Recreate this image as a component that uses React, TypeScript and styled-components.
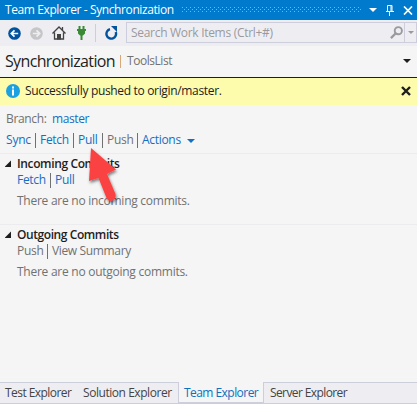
import React from "react";
import styled, { createGlobalStyle } from "styled-components";

const Global = createGlobalStyle`
  * { box-sizing: border-box; }
  body { margin: 0; background: #f5f5f5; overflow: hidden; }
`;

const Panel = styled.div`
  width: 417px;
  height: 404px;
  display: flex;
  flex-direction: column;
  position: relative;
  background: #f5f5f5;
  font-family: "Open Sans", "Noto Sans", sans-serif;
  font-size: 12px;
  line-height: 16px;
  color: #1e1e1e;
  white-space: nowrap;
  overflow: hidden;
`;

const Label = styled.span<{ $w: number; $color?: string; $ls?: number; $size?: number; $weight?: number }>`
  flex: none;
  width: ${(p) => p.$w}px;
  color: ${(p) => p.$color ?? "inherit"};
  letter-spacing: ${(p) => p.$ls ?? -0.3}px;
  font-size: ${(p) => p.$size ?? 12}px;
  font-weight: ${(p) => p.$weight ?? 400};
`;

const TitleBar = styled.header`
  flex: none;
  height: 20px;
  display: flex;
  align-items: center;
  padding: 0 6px 0 5px;
  background: #007acc;
  color: #fff;
`;

const Grip = styled.svg`
  flex: none;
  display: block;
  width: 179px;
  height: 5px;
  margin: 0 8px 1px 0;
`;

const Toolbar = styled.div`
  flex: none;
  height: 26px;
  display: flex;
  align-items: center;
  background: #eeeef2;
`;

const Icon = styled.svg<{ $w: number; $h: number; $ml?: number }>`
  flex: none;
  display: block;
  width: ${(p) => p.$w}px;
  height: ${(p) => p.$h}px;
  margin-left: ${(p) => p.$ml ?? 0}px;
`;

const ToolDivider = styled.div`
  width: 1px;
  height: 18px;
  margin: 0 9px 0 9px;
  background: #cccedb;
`;

const Search = styled.div`
  flex: 1;
  height: 21px;
  margin: 0 0 1px 8px;
  display: flex;
  align-items: center;
  border: 1px solid #cccedb;
  padding-left: 4px;
  color: #9a9a9e;
`;

const SearchMenu = styled.div`
  width: 12px;
  height: 19px;
  margin-left: 1px;
  display: flex;
  align-items: center;
  justify-content: center;
  border-left: 1px solid #cccedb;
`;

const Heading = styled.div`
  flex: none;
  height: 31px;
  display: flex;
  align-items: center;
  padding: 1px 6px 3px 5px;
`;

const Spacer = styled.div`
  flex: 1;
`;

const Notice = styled.div`
  flex: none;
  height: 28px;
  display: flex;
  align-items: center;
  padding: 0 6px 2px 6px;
  background: #fdfbac;
  border-top: 1px solid #1e1e1e;
`;

const NoticeText = styled(Label)`
  margin-left: 5px;
`;

const Row = styled.div<{ $h: number; $pl: number; $pt?: number }>`
  flex: none;
  height: ${(p) => p.$h}px;
  padding: ${(p) => p.$pt ?? 0}px 0 0 ${(p) => p.$pl}px;
  display: flex;
  align-items: flex-start;
`;

const Bar = styled.i<{ $gap?: number }>`
  flex: none;
  width: 1px;
  height: 15px;
  margin: 1px ${(p) => p.$gap ?? 4}px 0 0;
  background: #717171;
`;

const HeadingBar = styled(Bar)`
  height: 13px;
  background: #d9a878;
`;

const Section = styled.section`
  flex: none;
  height: 71px;
  padding-top: 2px;
  border-top: 1px solid #ececee;
`;

const Tabs = styled.nav`
  flex: none;
  height: 22px;
  display: flex;
  margin-top: auto;
`;

const TabGroup = styled.div<{ $w?: number; $active?: boolean; $side?: "left" | "right" }>`
  flex: ${(p) => (p.$w ? "none" : "1")};
  width: ${(p) => (p.$w ? `${p.$w}px` : "auto")};
  display: flex;
  padding: ${(p) => (p.$active ? "3px 0 0 5px" : p.$side === "left" ? "2px 0 0 6px" : "2px 0 0 5px")};
  background: ${(p) => (p.$active ? "#f5f5f5" : "#eeeef2")};
  border: 0 solid #cccedb;
  border-top-width: ${(p) => (p.$active ? 0 : 1)}px;
  border-bottom-width: ${(p) => (p.$active ? 2 : 1)}px;
  border-right-width: ${(p) => (p.$side === "right" ? 1 : 0)}px;
  border-left-width: ${(p) => (p.$side === "left" ? 1 : 0)}px;
`;

const Pointer = styled.svg`
  position: absolute;
  left: 80px;
  top: 142px;
  width: 46px;
  height: 68px;
`;

const LINK = "#1170c4";
const GRAY = "#717171";

const Caret = ({ w, h, color, ml }: { w: number; h: number; color: string; ml?: number }) => (
  <Icon $w={w} $h={h} $ml={ml} viewBox="0 0 8 4" preserveAspectRatio="none">
    <path d="M0 0H8L4 4Z" fill={color} />
  </Icon>
);

const Expander = () => (
  <Icon $w={12} $h={16} viewBox="0 0 12 16">
    <path d="M6 4.500V11H-.5Z" fill="#1e1e1e" />
  </Icon>
);

export default function App() {
  return (
    <>
      <Global />
      <Panel>
        <TitleBar>
          <Label $w={177} $ls={-0.4}>Team Explorer - Synchronization</Label>
          <Grip viewBox="0 0 179 5">
            <path d="M0 .5H179M0 4.5H179" stroke="#70b8e8" strokeDasharray="1 3" />
            <path d="M2 2.5H179" stroke="#70b8e8" strokeDasharray="1 3" />
          </Grip>
          <Caret w={8} h={4} color="#fff" />
          <Icon $w={8} $h={12} $ml={9} viewBox="0 0 8 12">
            <path d="M1.5 7V1.5H6V7M5 1V7M0 7.5H8M3.5 8V12" fill="none" stroke="#fff" />
          </Icon>
          <Icon $w={10} $h={9} $ml={9} viewBox="0 0 10 9">
            <path d="M1 .5L9 8.5M9 .5L1 8.5" stroke="#fff" strokeWidth="1.7" />
          </Icon>
        </TitleBar>

        <Toolbar>
          <Icon $w={13} $h={13} $ml={8} viewBox="0 0 13 13">
            <circle cx="6.5" cy="6.5" r="6.3" fill="#00539c" />
            <path d="M10.2 6.5H3.7M6.5 3.3L3.3 6.5L6.5 9.7" fill="none" stroke="#fff" strokeWidth="1.7" />
          </Icon>
          <Icon $w={13} $h={13} $ml={9} viewBox="0 0 13 13">
            <circle cx="6.5" cy="6.5" r="6.3" fill="#c6c6c8" />
            <path d="M2.8 6.5H9.3M6.5 3.3L9.7 6.5L6.5 9.7" fill="none" stroke="#eeeef2" strokeWidth="1.7" />
          </Icon>
          <Icon $w={14} $h={14} $ml={9} viewBox="0 0 14 14">
            <path d="M.5 7.5L7 1L13.5 7.5M2.5 6.5V13H11.5V6.5M10.5 4V1" fill="none" stroke="#424242" strokeWidth="1.3" />
            <path d="M5 8H9V13.5H5Z" fill="#424242" />
          </Icon>
          <Icon $w={9} $h={14} $ml={11} viewBox="0 0 9 14">
            <path d="M1.5 0H3.5V3H5.5V0H7.5V3H9V5H8V7.5L6 9.5H5.5V14H3.5V9.5H3L1 7.5V5H0V3H1.5Z" fill="#388a34" />
          </Icon>
          <ToolDivider />
          <Icon $w={13} $h={14} viewBox="0 0 13 14">
            <path d="M5 3.2A4.8 4.8 0 1 0 10.7 6" fill="none" stroke="#00539c" strokeWidth="2.4" />
            <path d="M6 0H12V6Z" fill="#00539c" />
          </Icon>
          <Search>
            <Label $w={233}>Search Work Items (Ctrl+#)</Label>
            <Spacer />
            <Icon $w={13} $h={13} viewBox="0 0 13 13">
              <circle cx="8.3" cy="4.7" r="3.6" fill="none" stroke="#9a9a9e" strokeWidth="1.9" />
              <path d="M5.8 7.2L.9 12.1" stroke="#9a9a9e" strokeWidth="2.3" />
            </Icon>
            <SearchMenu>
              <Caret w={6} h={3} color="#9a9a9e" />
            </SearchMenu>
          </Search>
        </Toolbar>

        <Heading>
          <Label $w={115} $size={16} $ls={-0.65} $weight={500}>Synchronization</Label>
          <HeadingBar $gap={6} />
          <Label $w={60} $color={GRAY} $ls={-0.45}>ToolsList</Label>
          <Spacer />
          <Caret w={8} h={4} color="#1e1e1e" />
        </Heading>

        <Notice>
          <Icon $w={14} $h={14} viewBox="0 0 14 14">
            <circle cx="7" cy="7" r="7" fill="#1ba1e2" />
            <path d="M6 2.5H8V4.5H6ZM6 5.5H8V11.5H6Z" fill="#fff" />
          </Icon>
          <NoticeText $w={220} $ls={-0.33}>Successfully pushed to origin/master.</NoticeText>
          <Spacer />
          <Icon $w={10} $h={10} viewBox="0 0 10 10">
            <path d="M1 1L9 9M9 1L1 9" stroke="#1e1e1e" strokeWidth="2.4" />
          </Icon>
        </Notice>

        <Row $h={21} $pl={6} $pt={6}>
          <Label $w={46} $color={GRAY} $ls={-0.35}>Branch:</Label>
          <Label $w={50} $color={LINK} $ls={-0.4}>master</Label>
        </Row>
        <Row $h={27} $pl={6} $pt={6}>
          <Label $w={29} $color={LINK} $ls={-0.2}>Sync</Label>
          <Bar />
          <Label $w={33} $color={LINK}>Fetch</Label>
          <Bar />
          <Label $w={24} $color={LINK}>Pull</Label>
          <Bar />
          <Label $w={30} $color={GRAY}>Push</Label>
          <Bar />
          <Label $w={45} $color={LINK}>Actions</Label>
          <Icon $w={8} $h={16} viewBox="0 0 8 16">
            <path d="M0 7H8L4 11Z" fill={LINK} />
          </Icon>
        </Row>

        <Section>
          <Row $h={16} $pl={5}>
            <Expander />
            <Label $w={110} $weight={600} $ls={-0.37}>Incoming Commits</Label>
          </Row>
          <Row $h={21} $pl={17}>
            <Label $w={33} $color={LINK}>Fetch</Label>
            <Bar />
            <Label $w={24} $color={LINK}>Pull</Label>
          </Row>
          <Row $h={16} $pl={17}>
            <Label $w={180} $color={GRAY} $ls={-0.26}>There are no incoming commits.</Label>
          </Row>
        </Section>
        <Section>
          <Row $h={16} $pl={5}>
            <Expander />
            <Label $w={110} $weight={600} $ls={-0.42}>Outgoing Commits</Label>
          </Row>
          <Row $h={21} $pl={17}>
            <Label $w={30} $color={GRAY}>Push</Label>
            <Bar />
            <Label $w={90} $color={GRAY} $ls={-0.35}>View Summary</Label>
          </Row>
          <Row $h={16} $pl={17}>
            <Label $w={180} $color={GRAY} $ls={-0.26}>There are no outgoing commits.</Label>
          </Row>
        </Section>

        <Tabs>
          <TabGroup $w={179} $side="right">
            <Label $w={78} $color="#444" $ls={-0.55}>Test Explorer</Label>
            <Label $w={90} $color="#444" $ls={-0.45}>Solution Explorer</Label>
          </TabGroup>
          <TabGroup $w={84} $active>
            <Label $w={78} $color="#0e70c0" $ls={-0.55}>Team Explorer</Label>
          </TabGroup>
          <TabGroup $side="left">
            <Label $w={90} $color="#444" $ls={-0.6}>Server Explorer</Label>
          </TabGroup>
        </Tabs>

        <Pointer viewBox="80 142 46 68">
          <defs>
            <filter id="shadow" x="-30%" y="-30%" width="160%" height="160%">
              <feDropShadow dx="1" dy="2" stdDeviation="1.6" floodColor="#000" floodOpacity="0.5" />
            </filter>
          </defs>
          <path
            d="M91 148L116 169.5L107 174L115.500 194Q116.500 198 112.500 200.500Q108.500 202 106.500 198L98.500 178L89 181Z"
            fill="#fb4343"
            filter="url(#shadow)"
          />
        </Pointer>
      </Panel>
    </>
  );
}
